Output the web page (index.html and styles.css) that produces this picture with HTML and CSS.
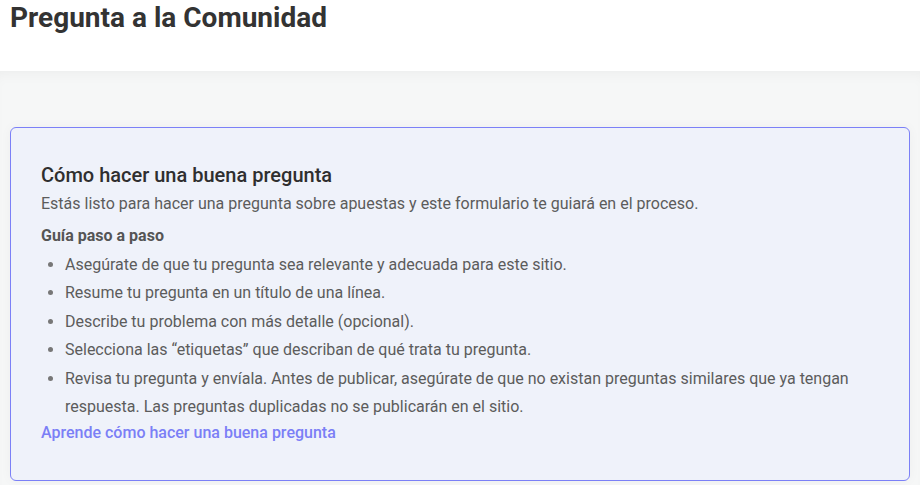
FILE: index.html
```html
<!DOCTYPE html>
<html lang="es">

<head>
    <meta charset="UTF-8">
    <meta name="viewport" content="width=device-width, initial-scale=1.0">
    <title>Pregunta a la Comunidad</title>
    <link rel="stylesheet" href="styles.css">
</head>

<body>
    <div class="page-header">
        <h1 class="page-title">Pregunta a la Comunidad</h1>
    </div>
    <div class="page-content">
        <div class="tips-card">
            <h2 class="tips-title">Cómo hacer una buena pregunta</h2>
            <p class="tips-intro">Estás listo para hacer una pregunta sobre apuestas y este formulario te guiará en el proceso.</p>
            <h3 class="tips-subtitle">Guía paso a paso</h3>
            <ul class="tips-list">
                <li>Asegúrate de que tu pregunta sea relevante y adecuada para este sitio.</li>
                <li>Resume tu pregunta en un título de una línea.</li>
                <li>Describe tu problema con más detalle (opcional).</li>
                <li>Selecciona las “etiquetas” que describan de qué trata tu pregunta.</li>
                <li>Revisa tu pregunta y envíala. Antes de publicar, asegúrate de que no existan preguntas similares que ya tengan respuesta. Las preguntas duplicadas no se publicarán en el sitio.</li>
            </ul>
            <a class="tips-link" href="javascript:;">Aprende cómo hacer una buena pregunta</a>
        </div>
    </div>
</body>

</html>
```

FILE: styles.css
```css
* {
    box-sizing: border-box;
}

body,
h1,
h2,
h3,
p,
ul,
li {
    margin: 0px;
    padding: 0px;
}

body {
    font-family: Roboto, "Liberation Sans", Arial, sans-serif;
    color: #333333;
    background: #f6f7f7;
}

.page-header {
    height: 71px;
    padding: 1px 10px 0px 10px;
    background: #ffffff;
}

.page-title {
    font-size: 28px;
    font-weight: 700;
    line-height: 34px;
    color: #333333;
}

.page-content {
    padding: 56px 10px 5px 10px;
    box-shadow: inset 0px 10px 16px -10px rgba(0, 0, 0, .06);
}

.tips-card {
    height: 354px;
    padding: 34px 30px 30px 30px;
    background: #eff2fa;
    border: 1px solid #7b80f7;
    border-radius: 6px;
    box-shadow: 0px 0px 12px rgba(0, 0, 0, .04);
}

.tips-title {
    font-size: 20px;
    font-weight: 500;
    line-height: 26px;
    color: #2f2f2f;
}

.tips-intro {
    margin-top: 2px;
    font-size: 16px;
    line-height: 28px;
    color: #5c5c5c;
}

.tips-subtitle {
    margin-top: 4px;
    font-size: 16px;
    font-weight: 700;
    line-height: 28px;
    color: #555555;
}

.tips-list {
    margin-top: 1px;
    padding-left: 24px;
    font-size: 16px;
    line-height: 28.4px;
    color: #5c5c5c;
}

.tips-list li::marker {
    color: #777777;
}

.tips-link {
    display: inline-block;
    font-size: 16px;
    font-weight: 500;
    line-height: 24px;
    color: #7b7ff6;
    text-decoration: none;
}
```
